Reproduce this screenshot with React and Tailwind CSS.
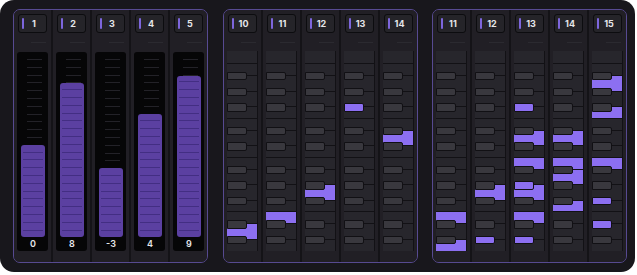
import React from "react";

const faders = [
  { n: 1, v: "0", h: 92 },
  { n: 2, v: "8", h: 154 },
  { n: 3, v: "-3", h: 69 },
  { n: 4, v: "4", h: 123 },
  { n: 5, v: "9", h: 161 },
];

const whites = [
  { id: "C5", h: 13.4 },
  { id: "B4", h: 11.7 },
  { id: "A4", h: 15.6 },
  { id: "G4", h: 15.6 },
  { id: "F4", h: 11.7 },
  { id: "E4", h: 11.7 },
  { id: "D4", h: 15.6 },
  { id: "C4", h: 11.7 },
  { id: "B3", h: 11.7 },
  { id: "A3", h: 15.6 },
  { id: "G3", h: 15.6 },
  { id: "F3", h: 11.7 },
  { id: "E3", h: 11.7 },
  { id: "D3", h: 15.6 },
  { id: "C3", h: 12 },
];

const blacks = [
  { id: "A#4", t: 21.2 },
  { id: "G#4", t: 36.8 },
  { id: "F#4", t: 52.4 },
  { id: "D#4", t: 75.8 },
  { id: "C#4", t: 91.4 },
  { id: "A#3", t: 114.8 },
  { id: "G#3", t: 130.4 },
  { id: "F#3", t: 146.0 },
  { id: "D#3", t: 169.4 },
  { id: "C#3", t: 185.0 },
];

const group2 = [
  { n: 10, notes: ["D3"] },
  { n: 11, notes: ["E3"] },
  { n: 12, notes: ["G3"] },
  { n: 13, notes: ["F#4"] },
  { n: 14, notes: ["D4"] },
];

const group3 = [
  { n: 11, notes: ["E3", "C3"] },
  { n: 12, notes: ["G3", "C#3"] },
  { n: 13, notes: ["F#4", "D4", "B3", "G#3", "G3", "E3", "C#3"] },
  { n: 14, notes: ["D4", "B3", "A3", "F3"] },
  { n: 15, notes: ["A4", "F4", "B3", "F#3", "D#3"] },
];

function Header({ n }) {
  return (
    <div className="mx-[4px] h-[19px] w-[29px] rounded-[3px] border border-[#0c0c0f] bg-[#252429] flex items-center pl-[3px] pr-[2px]">
      <div className="w-[2px] h-[11px] rounded-full bg-[#7d66dd]" />
      <span className="flex-1 text-center text-[9px] font-bold leading-none text-[#e6e6ea]">
        {n}
      </span>
    </div>
  );
}

function Strip({ n, last, children }) {
  return (
    <div
      className={
        "flex-1 flex flex-col pt-[4px] bg-[#211f25] " +
        (last ? "" : "border-r-2 border-[#141317]")
      }
    >
      <Header n={n} />
      <div className="mt-[9px] mr-[5px] ml-auto h-px w-[15px] bg-[#2b2a30]" />
      {children}
    </div>
  );
}

function Fader({ v, h }) {
  const ticks = Array.from({ length: 23 });
  const fillLines = Array.from({ length: 22 });
  return (
    <div className="mt-[9px] mx-[3px] h-[199px] rounded-[3px] bg-[#060607] flex flex-col">
      <div className="relative flex-1 pt-[7px] overflow-hidden">
        {ticks.map((_, i) => (
          <div key={i} className="h-[7.8px] pl-[10px]">
            <div className="h-px w-[15px] bg-[#232228]" />
          </div>
        ))}
        <div
          className="absolute bottom-[2px] left-[4px] right-[3px] rounded-[3px] bg-[#5b40a1] overflow-hidden flex flex-col-reverse"
          style={{ height: h }}
        >
          <div className="h-[6.4px] shrink-0" />
          {fillLines.map((_, i) => (
            <div key={i} className="h-[7.8px] shrink-0 border-b border-[#432e83] mx-[2px]" />
          ))}
        </div>
      </div>
      <div className="h-[12px] flex items-start justify-center pl-[1px] text-[9px] font-semibold leading-none text-[#e6e6ea]">
        {v}
      </div>
    </div>
  );
}

function Keyboard({ notes }) {
  const on = new Set(notes);
  return (
    <div className="mt-[8px] ml-[3px] mr-[3px] h-[200px] relative overflow-hidden border-r border-[#121115]">
      <div className="flex flex-col">
        {whites.map((w) => (
          <div
            key={w.id}
            className={
              "shrink-0 border-b border-[#121115] " +
              (on.has(w.id) ? "bg-[#8c6ff1]" : "bg-[#27262c]")
            }
            style={{ height: w.h }}
          />
        ))}
      </div>
      {blacks.map((b) => (
        <div
          key={b.id}
          className={
            "absolute left-0 w-[20px] h-[8.4px] rounded-r-[2px] border border-[#111014] " +
            (on.has(b.id) ? "bg-[#8c6ff1]" : "bg-[#39383e]")
          }
          style={{ top: b.t - 0.2 }}
        />
      ))}
    </div>
  );
}

function Group({ children }) {
  return (
    <div className="w-[195px] h-[254px] rounded-[7px] border border-[#574a91] flex overflow-hidden bg-[#211f25]">
      {children}
    </div>
  );
}

export default function App() {
  return (
    <div className="w-[637px] h-[275px] bg-white font-['Inter','Noto_Sans',sans-serif]">
      <div className="w-[635px] h-[272px] rounded-[14px] bg-[#18171c] flex gap-[14.5px] pl-[13px] pt-[9px]">
        <Group>
          {faders.map((f, i) => (
            <Strip key={f.n} n={f.n} last={i === 4}>
              <Fader v={f.v} h={f.h} />
            </Strip>
          ))}
        </Group>
        <Group>
          {group2.map((c, i) => (
            <Strip key={c.n} n={c.n} last={i === 4}>
              <Keyboard notes={c.notes} />
            </Strip>
          ))}
        </Group>
        <Group>
          {group3.map((c, i) => (
            <Strip key={c.n} n={c.n} last={i === 4}>
              <Keyboard notes={c.notes} />
            </Strip>
          ))}
        </Group>
      </div>
    </div>
  );
}
